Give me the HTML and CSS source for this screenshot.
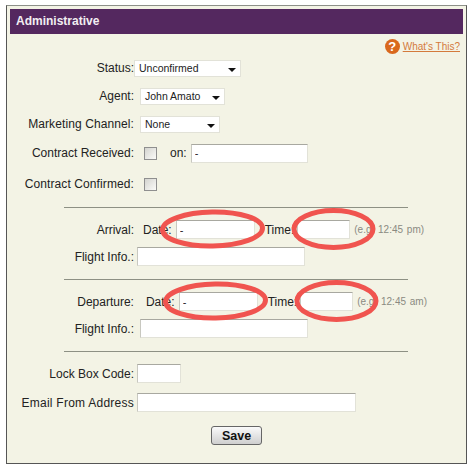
FILE: index.html
```html
<!DOCTYPE html>
<html lang="en">

<head>
    <meta charset="UTF-8">
    <meta name="viewport" content="width=device-width, initial-scale=1.0">
    <title>Administrative</title>
    <link rel="stylesheet" href="styles.css">
</head>

<body>
    <div class="page">
        <div class="panel">
            <h2 class="panel-title">Administrative</h2>
            <div class="help-row">
                <span class="help-icon">?</span>
                <a class="help-link" href="#">What's This?</a>
            </div>

            <div class="row">
                <label class="label">Status:</label>
                <span class="select select-status">Unconfirmed</span>
            </div>
            <div class="row">
                <label class="label">Agent:</label>
                <span class="select select-agent">John Amato</span>
            </div>
            <div class="row">
                <label class="label label-wide">Marketing Channel:</label>
                <span class="select select-channel">None</span>
            </div>
            <div class="row row-tall">
                <label class="label">Contract Received:</label>
                <input class="check" type="checkbox">
                <span class="on-label">on:</span>
                <input class="input input-on" type="text" value="-">
            </div>
            <div class="row row-confirmed">
                <label class="label label-wide">Contract Confirmed:</label>
                <input class="check" type="checkbox">
            </div>

            <div class="section arrival">
                <div class="row">
                    <label class="label">Arrival:</label>
                    <span class="date-label">Date:</span>
                    <input class="input input-date" type="text" value="-">
                    <span class="time-label">Time:</span>
                    <input class="input input-time" type="text">
                    <span class="hint">(e.g. 12:45 pm)</span>
                </div>
                <div class="row">
                    <label class="label">Flight Info.:</label>
                    <input class="input input-flight" type="text">
                </div>
            </div>

            <div class="section departure">
                <div class="row">
                    <label class="label">Departure:</label>
                    <span class="date-label">Date:</span>
                    <input class="input input-date" type="text" value="-">
                    <span class="time-label">Time:</span>
                    <input class="input input-time" type="text">
                    <span class="hint">(e.g. 12:45 am)</span>
                </div>
                <div class="row">
                    <label class="label">Flight Info.:</label>
                    <input class="input input-flight" type="text">
                </div>
            </div>

            <div class="section last">
                <div class="row">
                    <label class="label">Lock Box Code:</label>
                    <input class="input input-code" type="text">
                </div>
                <div class="row row-email">
                    <label class="label label-email">Email From Address</label>
                    <input class="input input-email" type="text">
                </div>
            </div>

            <div class="actions">
                <button class="save" type="button">Save</button>
            </div>
        </div>

        <!-- red marks drawn on top of the screenshot -->
        <svg class="marks" width="475" height="472" viewBox="0 0 475 472">
            <ellipse cx="212.500" cy="229" rx="50" ry="17" transform="rotate(-1 212 229)" />
            <ellipse cx="333.500" cy="229" rx="39.500" ry="18.500" />
            <ellipse cx="215.500" cy="301" rx="50" ry="17" transform="rotate(-1 215 301)" />
            <ellipse cx="336.500" cy="301" rx="39.500" ry="18.500" />
        </svg>
    </div>
</body>

</html>
```
FILE: styles.css
```css
* {
    margin: 0;
    padding: 0;
    box-sizing: border-box;
}

body {
    background-color: white;
    font-family: "Liberation Sans", Arial, sans-serif;
    font-size: 12px;
    color: #222;
}

.page {
    position: relative;
    width: 475px;
    height: 472px;
    padding: 5px 8px 0 6px;
}

.panel {
    width: 461px;
    height: 459px;
    padding: 3px;
    background-color: #f3f3e5;
    border: 1px solid #555;
    border-top-color: #8d9089;
}

.panel-title {
    height: 25px;
    padding-left: 6px;
    line-height: 25px;
    font-size: 12px;
    color: #f2eef2;
    background-color: #54285f;
}

.help-row {
    display: flex;
    align-items: center;
    justify-content: flex-end;
    height: 20px;
    padding: 4px 3px 0 0;
}

.help-icon {
    width: 15px;
    height: 15px;
    margin-right: 3px;
    border-radius: 50%;
    background-color: #d9681d;
    color: white;
    font-size: 13px;
    font-weight: bold;
    line-height: 15px;
    text-align: center;
}

.help-link {
    font-size: 10px;
    color: #d47a3c;
}

.row {
    display: flex;
    align-items: center;
    height: 28px;
    margin-left: -3px;
}

.row-tall {
    height: 30px;
}

.row-confirmed {
    height: 31px;
    padding-top: 1px;
}

.label {
    width: 127px;
    text-align: right;
    white-space: nowrap;
}

.label-wide {
    letter-spacing: 0.100px;
}

.label-email {
    letter-spacing: 0.250px;
}

.input {
    height: 19px;
    padding: 0 3px;
    font-family: inherit;
    font-size: 11px;
    color: #222;
    background-color: white;
    border: 1px solid #e2e2d8;
    border-top-color: #a8a8a0;
    border-left-color: #c8c8c0;
    outline: none;
}

.select {
    position: relative;
    display: block;
    height: 17px;
    padding-left: 4px;
    font-size: 10.500px;
    line-height: 14px;
    background-color: white;
    border: 1px solid #e2e2d8;
}

.select::after {
    content: "";
    position: absolute;
    top: 7px;
    right: 4px;
    border: 4px solid transparent;
    border-top-color: #111;
    border-bottom: none;
}

.select-status {
    width: 107px;
}

.select-agent {
    width: 85px;
    margin-left: 6px;
}

.select-channel {
    width: 80px;
    margin-left: 6px;
}

.check {
    appearance: none;
    width: 13px;
    height: 13px;
    margin-left: 10px;
    border: 1px solid #8f8f8f;
    background-image: linear-gradient(135deg, #d4d4d0, #fbfbf8);
}

.on-label {
    margin-left: 13px;
}

.input-on {
    width: 117px;
    margin-left: 4px;
}

.section {
    width: 344px;
    margin: 0 0 0 54px;
    padding: 8px 0 9px;
    border-top: 1px solid #8d9084;
}

.arrival {
    margin-top: 8px;
}

.section .row {
    height: 27px;
    margin-left: -57px;
    width: 420px;
}

.section .input-flight {
    width: 168px;
    margin-left: 3px;
}

.date-label {
    margin-left: 9px;
}

.input-date {
    width: 79px;
    margin-left: 4px;
}

.time-label {
    margin-left: 10px;
}

.input-time {
    width: 53px;
    margin-left: 3px;
}

.hint {
    margin-left: 4px;
    font-size: 10px;
    word-spacing: 1px;
    color: #8a8a82;
    white-space: nowrap;
}

.departure .date-label {
    margin-left: 12px;
}

.departure .input-flight {
    margin-left: 6px;
}

.last {
    padding-bottom: 0;
}

.section .row-email {
    height: 31px;
}

.input-code {
    width: 44px;
    margin-left: 3px;
}

.section .input-email {
    width: 219px;
    margin-left: 3px;
}

.actions {
    display: flex;
    justify-content: center;
    margin-top: 8px;
}

.save {
    width: 51px;
    height: 19px;
    font-family: inherit;
    font-size: 12.500px;
    font-weight: bold;
    color: #111;
    background-image: linear-gradient(#fafafa, #cfcfcf);
    border: 1px solid #666;
    border-radius: 3px;
}

.marks {
    position: absolute;
    top: 0;
    left: 0;
    fill: none;
    stroke: #f0544f;
    stroke-width: 5;
    pointer-events: none;
}
```
